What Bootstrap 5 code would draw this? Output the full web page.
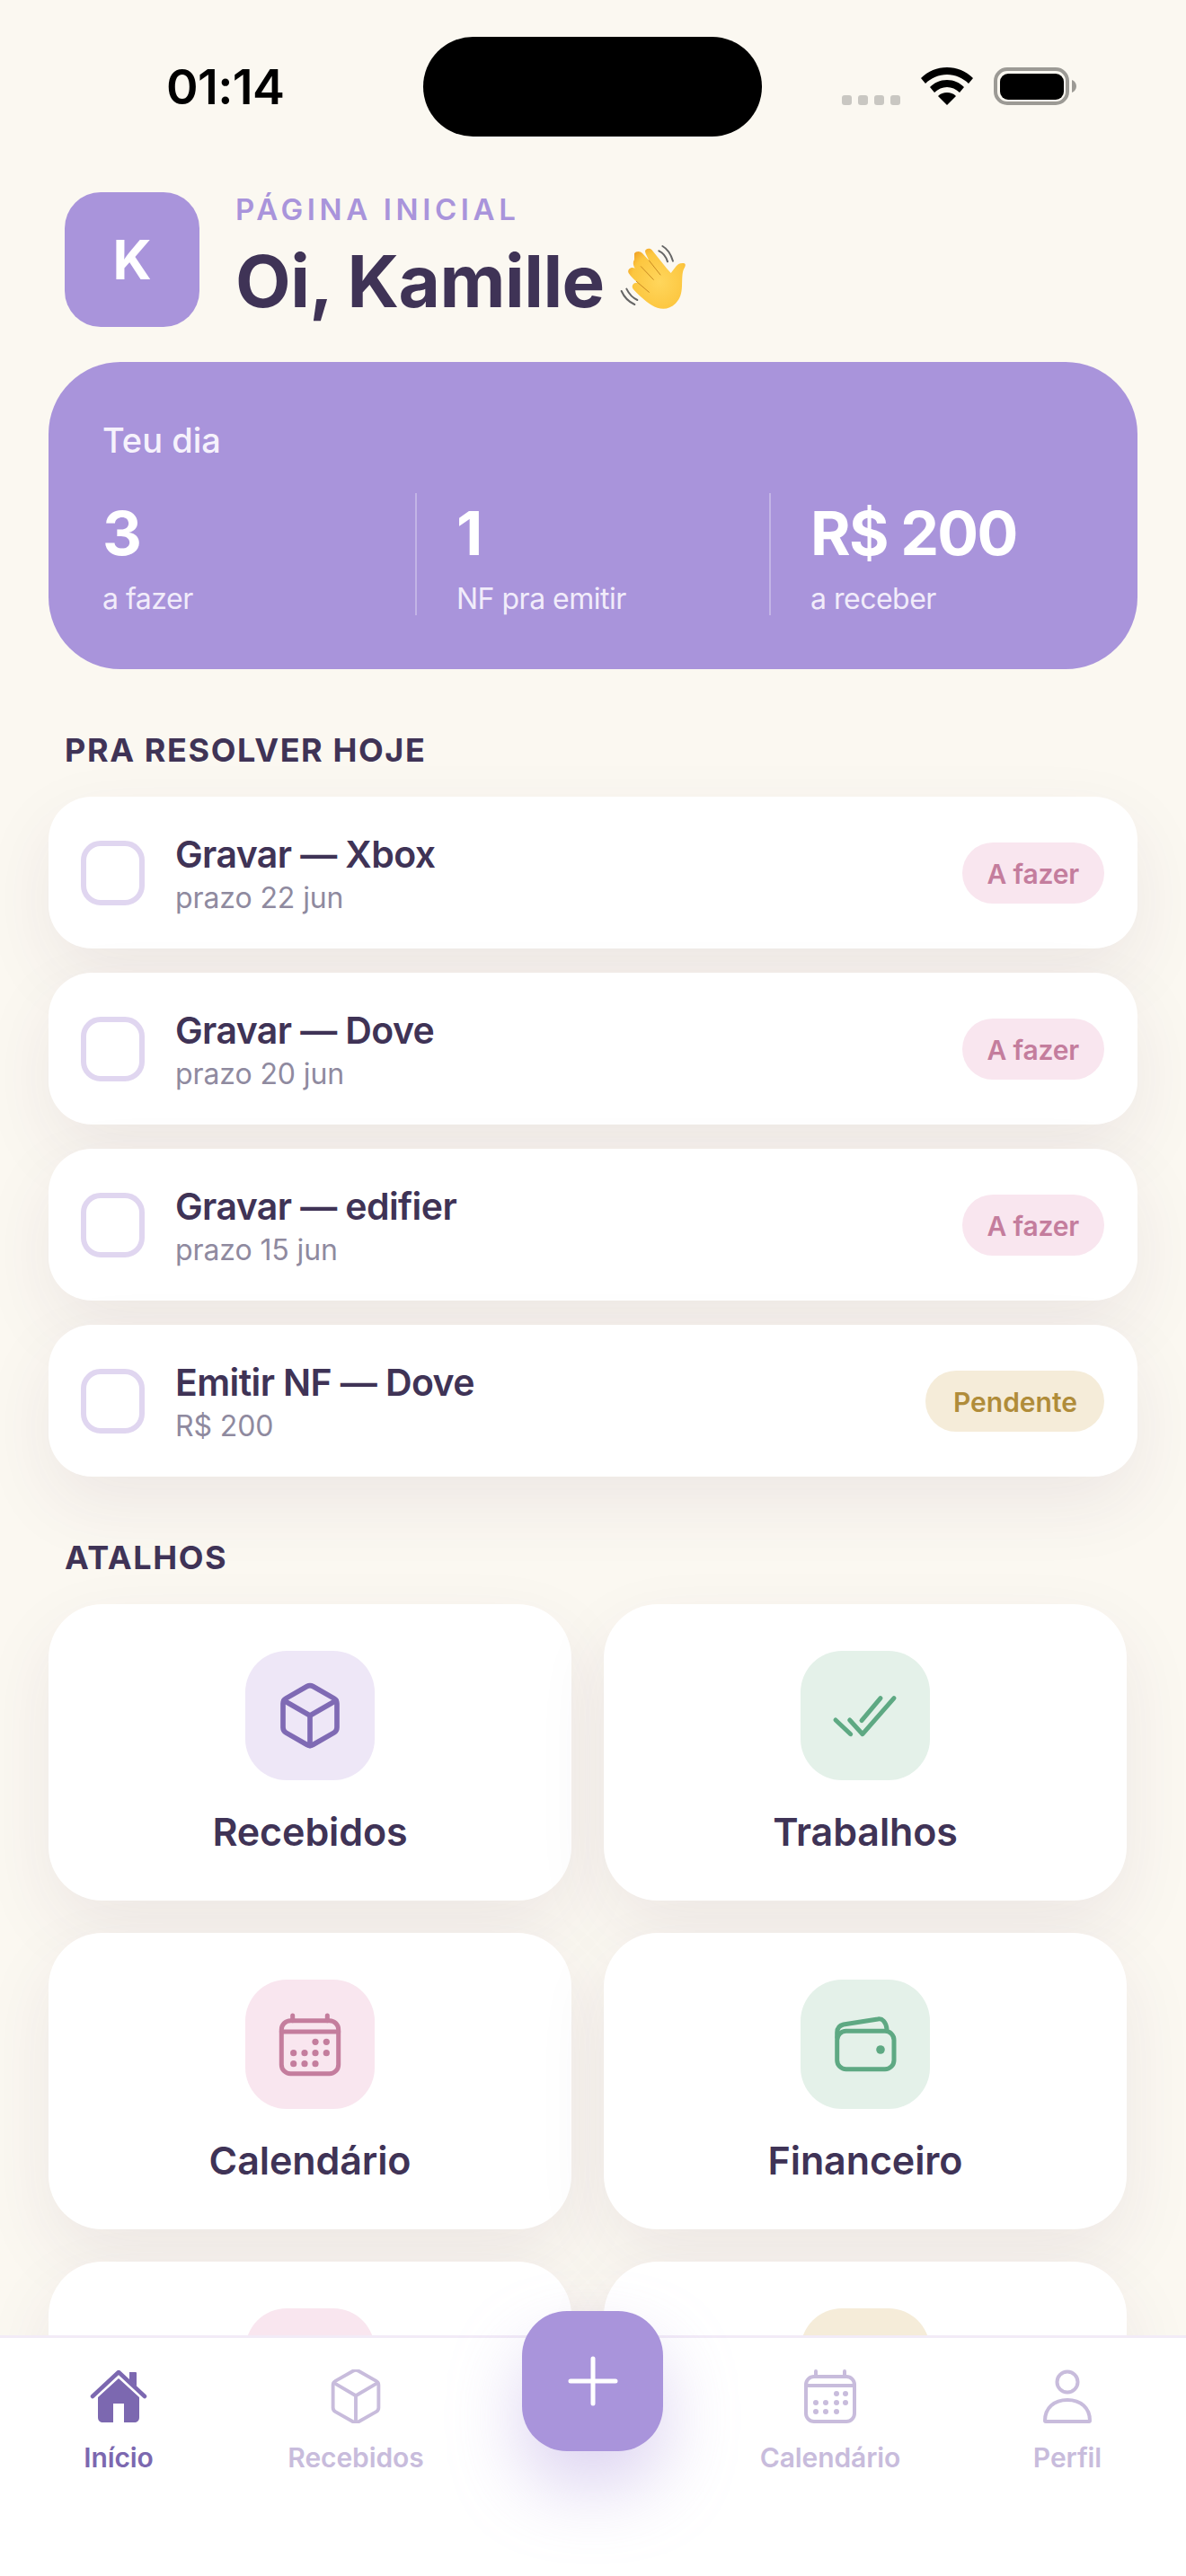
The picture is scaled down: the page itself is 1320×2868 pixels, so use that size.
<!DOCTYPE html>
<html lang="pt-BR">
<head>
    <meta charset="UTF-8">
    <meta name="viewport" content="width=device-width, initial-scale=1.0">
    <title>Página inicial</title>
    <link href="https://cdn.jsdelivr.net/npm/bootstrap@5.3.0/dist/css/bootstrap.min.css" rel="stylesheet">
    <style>
        body {
            font-family: Inter, "Liberation Sans", sans-serif;
            background-color: #fbf8f1;
            color: #3f3356;
            width: 1320px;
            height: 2868px;
            overflow: hidden;
        }
        .app-shell { height: 2868px; }
        .status-bar { padding-top: 41px; height: 173px; }
        .status-time { width: 471px; height: 111px; padding-left: 185px; font-size: 54px; font-weight: 600; color: #000; letter-spacing: -.6px; }
        .status-island { width: 377px; height: 111px; background: #000; border-radius: 56px; }
        .status-right { padding-left: 89px; height: 42px; margin-top: 34px; }
        .signal-dots { gap: 7px; width: 65px; margin-right: 23px; }
        .signal-dots span { width: 11px; height: 11px; background: #c9c7c2; border-radius: 3px; }
        .batt-wrap { margin-left: 23px; }
        .page-scroll { min-height: 0; padding: 41px 54px 0; }
        .hello-row { padding-left: 18px; gap: 40px; height: 150px; }
        .avatar-box { width: 150px; height: 150px; background: #a994db; color: #fff; border-radius: 40px; font-size: 60px; font-weight: 700; }
        .eyebrow { font-size: 33px; line-height: 40px; font-weight: 600; color: #a994db; letter-spacing: 4.6px; margin-top: -2px; margin-bottom: 10px; }
        .hello-title { font-size: 80px; line-height: 100px; font-weight: 700; margin: 0; letter-spacing: -.5px; }
        .wave-emoji { width: 80px; height: 80px; margin-left: 16px; margin-top: -6px; }
        .day-card { background: #a994db; color: #fff; border-radius: 80px; height: 342px; margin-top: 39px; padding: 65px 60px 0; }
        .day-title { font-size: 38px; line-height: 44px; font-weight: 500; color: #f6f2fc; }
        .day-stats { margin-top: 37px; height: 136px; }
        .day-stat { flex: 1 1 0; padding: 0 44px; border-left: 2px solid rgba(255,255,255,.3); }
        .day-stat:first-child { padding-left: 0; border-left: 0; }
        .day-stat:last-child { padding-right: 0; }
        .stat-num { font-size: 68px; line-height: 88px; font-weight: 700; letter-spacing: -1.7px; }
        .stat-label { font-size: 32px; line-height: 39px; margin-top: 10px; color: #f1ecfa; letter-spacing: -.5px; }
        .block-label { font-size: 36px; line-height: 44px; font-weight: 700; letter-spacing: 1.6px; padding-left: 18px; }
        .label-today { margin-top: 68px; margin-bottom: 30px; }
        .label-short { margin-top: 68px; margin-bottom: 30px; }
        .task-list { gap: 27px; }
        .task-row { height: 169px; background: #fff; border-radius: 48px; padding: 0 37px 0 36px; box-shadow: 0 30px 80px rgba(80,40,90,.08); }
        .task-check { width: 71px; height: 72px; border: 6px solid #e0d6f0; border-radius: 22px; flex: none; margin-right: 34px; }
        .task-name { font-size: 41px; line-height: 50px; font-weight: 600; letter-spacing: -.6px; padding-top: 2px; }
        .task-sub { font-size: 32px; line-height: 42px; color: #8f8a9f; letter-spacing: -.1px; margin-top: 3px; margin-bottom: -2px; }
        .task-tag { height: 68px; line-height: 70px; padding: 0 28px; font-size: 30px; font-weight: 600; border-radius: 34px; letter-spacing: -.2px; }
        .tag-todo { background: #f9e6ef; color: #c47d9d; }
        .tag-pending { background: #f5ecd9; color: #b08c3a; padding: 0 30px 0 31px; letter-spacing: 0; }
        .shortcut-grid { width: 1200px; grid-template-columns: 1fr 1fr; grid-auto-rows: 330px; gap: 36px; }
        .shortcut-card { background: #fff; border-radius: 60px; padding-top: 52px; box-shadow: 0 30px 80px rgba(80,40,90,.08); }
        .shortcut-icon { width: 144px; height: 144px; border-radius: 46px; }
        .shortcut-name { font-size: 43px; line-height: 52px; font-weight: 600; margin-top: 31px; letter-spacing: -.1px; }
        .tone-purple { background: #eee7f7; color: #7f6ab4; }
        .tone-green { background: #e4f1e9; color: #5ea983; }
        .tone-pink { background: #f9e6ef; color: #c47d9d; }
        .tone-yellow { background: #f5ecd9; color: #b08c3a; }
        .tab-bar { height: 268px; background: #fff; border-top: 3px solid #f2ebf7; padding-top: 35px; z-index: 2; }
        .tab-item { flex: 1 1 0; color: #c8bcdc; }
        .tab-item.is-active { color: #7c68b0; }
        .tab-icon { width: 64px; height: 60px; }
        .tab-label { font-size: 30px; line-height: 40px; font-weight: 600; margin-top: 18px; letter-spacing: -.1px; }
        .fab-add { left: 581px; top: -30px; width: 157px; height: 156px; background: #a994db; border-radius: 50px; box-shadow: 0 40px 80px rgba(169,148,219,.4); }
    </style>
</head>
<body>
    <div class="app-shell d-flex flex-column">
        <div class="status-bar d-flex align-items-start flex-shrink-0">
            <div class="status-time d-flex align-items-center">01:14</div>
            <div class="status-island"></div>
            <div class="status-right d-flex align-items-end">
                <div class="signal-dots d-flex"><span></span><span></span><span></span><span></span></div>
                <svg width="58" height="42" viewBox="0 0 58 42"><path d="M29 0C18 0 8 4 0 12l5 6c6-6 15-10 24-10s18 4 24 10l5-6C50 4 40 0 29 0z" fill="#000"/><path d="M29 14c-8 0-14 3-19 8l5 6c4-4 9-6 14-6s10 2 14 6l5-6c-5-5-11-8-19-8z" fill="#000"/><path d="M29 28c-4 0-7 1-10 4l10 10 10-10c-3-3-6-4-10-4z" fill="#000"/></svg>
                <svg class="batt-wrap" width="92" height="42" viewBox="0 0 92 42"><rect x="2" y="2" width="80" height="38" rx="13" fill="none" stroke="#9c9a95" stroke-width="4"/><rect x="7" y="7" width="71" height="29" rx="9" fill="#000"/><path d="M87 14c3 1 5 4 5 7s-2 6-5 7z" fill="#9c9a95"/></svg>
            </div>
        </div>

        <main class="page-scroll flex-grow-1 overflow-hidden">
            <div class="hello-row d-flex align-items-center">
                <div class="avatar-box d-flex align-items-center justify-content-center flex-shrink-0">K</div>
                <div>
                    <div class="eyebrow">PÁGINA INICIAL</div>
                    <div class="d-flex align-items-center">
                        <h1 class="hello-title">Oi, Kamille</h1>
                        <svg class="wave-emoji" viewBox="80 460 240 240">
                            <defs><radialGradient id="handFill" cx="55%" cy="55%" r="65%"><stop offset="0" stop-color="#ffd65c"/><stop offset=".75" stop-color="#fcc63f"/><stop offset="1" stop-color="#f0a226"/></radialGradient></defs>
                            <g fill="none" stroke="#666" stroke-width="6" stroke-linecap="round">
                                <path d="M213 488c14 6 24 20 29 36"/><path d="M225 472c16 9 29 30 35 50"/>
                                <path d="M88 622c8 18 24 36 44 45"/><path d="M105 615c7 14 20 30 36 37"/>
                            </g>
                            <path d="M131 497c6-10 20-9 27-1l22 24c-4-10-12-22-13-30-1-9 14-14 22-6l50 62 14 16c5-5 12-16 18-23 4-5 10-11 24-10 10 1 6 12 2 18-7 12-6 36-7 58-1 24-5 42-21 58-24 24-54 22-80 6-20-12-50-40-62-54-8-9 2-26 18-19-18-14-32-30-34-36-3-12 10-20 22-14-6-10-8-20-2-29z" fill="url(#handFill)"/>
                            <g fill="none" stroke="#c98a22" stroke-width="3" stroke-linecap="round"><path d="M180 520l38 48"/><path d="M153 540l42 44"/><path d="M138 590l42 36"/></g>
                        </svg>
                    </div>
                </div>
            </div>

            <section class="day-card">
                <div class="day-title">Teu dia</div>
                <div class="day-stats d-flex">
                    <div class="day-stat"><div class="stat-num">3</div><div class="stat-label">a fazer</div></div>
                    <div class="day-stat"><div class="stat-num">1</div><div class="stat-label">NF pra emitir</div></div>
                    <div class="day-stat"><div class="stat-num">R$ 200</div><div class="stat-label">a receber</div></div>
                </div>
            </section>

            <div class="block-label label-today">PRA RESOLVER HOJE</div>
            <div class="task-list d-flex flex-column">
                <div class="task-row d-flex align-items-center">
                    <div class="task-check"></div>
                    <div class="flex-grow-1"><div class="task-name">Gravar — Xbox</div><div class="task-sub">prazo 22 jun</div></div>
                    <span class="task-tag tag-todo">A fazer</span>
                </div>
                <div class="task-row d-flex align-items-center">
                    <div class="task-check"></div>
                    <div class="flex-grow-1"><div class="task-name">Gravar — Dove</div><div class="task-sub">prazo 20 jun</div></div>
                    <span class="task-tag tag-todo">A fazer</span>
                </div>
                <div class="task-row d-flex align-items-center">
                    <div class="task-check"></div>
                    <div class="flex-grow-1"><div class="task-name">Gravar — edifier</div><div class="task-sub">prazo 15 jun</div></div>
                    <span class="task-tag tag-todo">A fazer</span>
                </div>
                <div class="task-row d-flex align-items-center">
                    <div class="task-check"></div>
                    <div class="flex-grow-1"><div class="task-name">Emitir NF — Dove</div><div class="task-sub">R$ 200</div></div>
                    <span class="task-tag tag-pending">Pendente</span>
                </div>
            </div>

            <div class="block-label label-short">ATALHOS</div>
            <div class="shortcut-grid d-grid">
                <div class="shortcut-card d-flex flex-column align-items-center">
                    <div class="shortcut-icon tone-purple d-flex align-items-center justify-content-center">
                        <svg width="80" height="80" viewBox="0 0 24 24" fill="none" stroke="currentColor" stroke-width="1.7" stroke-linecap="round" stroke-linejoin="round"><path d="M21 16V8a2 2 0 0 0-1-1.73l-7-4a2 2 0 0 0-2 0l-7 4A2 2 0 0 0 3 8v8a2 2 0 0 0 1 1.73l7 4a2 2 0 0 0 2 0l7-4A2 2 0 0 0 21 16z"/><path d="M3.27 6.96 12 12.01l8.73-5.05"/><path d="M12 22.08V12"/></svg>
                    </div>
                    <div class="shortcut-name">Recebidos</div>
                </div>
                <div class="shortcut-card d-flex flex-column align-items-center">
                    <div class="shortcut-icon tone-green d-flex align-items-center justify-content-center">
                        <svg width="80" height="80" viewBox="0 0 80 80" fill="none" stroke="currentColor" stroke-width="5" stroke-linecap="round" stroke-linejoin="round"><path d="M7 45l16.7 15.7"/><path d="M22.7 45 37 60.7 72 20.7"/><path d="M36 45.7 57 20.7"/></svg>
                    </div>
                    <div class="shortcut-name">Trabalhos</div>
                </div>
                <div class="shortcut-card d-flex flex-column align-items-center">
                    <div class="shortcut-icon tone-pink d-flex align-items-center justify-content-center">
                        <svg width="80" height="80" viewBox="0 0 80 80" fill="none" stroke="currentColor" stroke-width="5" stroke-linecap="round"><rect x="8.3" y="13.7" width="63.4" height="59" rx="10"/><path d="M8.3 26h63.4"/><path d="M20.7 8v5.7M59.3 8v5.7"/><g fill="currentColor" stroke="none"><circle cx="46" cy="37.3" r="3.6"/><circle cx="58.3" cy="37.3" r="3.6"/><circle cx="21.7" cy="49.7" r="3.6"/><circle cx="34" cy="49.7" r="3.6"/><circle cx="46" cy="49.7" r="3.6"/><circle cx="58.3" cy="49.7" r="3.6"/><circle cx="21.7" cy="61.7" r="3.6"/><circle cx="34" cy="61.7" r="3.6"/><circle cx="46" cy="61.7" r="3.6"/></g></svg>
                    </div>
                    <div class="shortcut-name">Calendário</div>
                </div>
                <div class="shortcut-card d-flex flex-column align-items-center">
                    <div class="shortcut-icon tone-green d-flex align-items-center justify-content-center">
                        <svg width="80" height="80" viewBox="0 0 80 80" fill="none" stroke="currentColor" stroke-width="5" stroke-linecap="round"><rect x="8.7" y="25.3" width="63.3" height="42.4" rx="10"/><path d="M8.7 32v-5c0-5 3-8 7-9L54 12c5-1 9 3 10 11"/><circle cx="57" cy="46" r="4.8" fill="currentColor" stroke="none"/></svg>
                    </div>
                    <div class="shortcut-name">Financeiro</div>
                </div>
                <div class="shortcut-card d-flex flex-column align-items-center">
                    <div class="shortcut-icon tone-pink"></div>
                </div>
                <div class="shortcut-card d-flex flex-column align-items-center">
                    <div class="shortcut-icon tone-yellow"></div>
                </div>
            </div>
        </main>

        <nav class="tab-bar d-flex position-relative flex-shrink-0">
            <div class="tab-item is-active d-flex flex-column align-items-center">
                <svg class="tab-icon" viewBox="0 0 64 60" fill="currentColor"><path d="M32 10 9 31v22c0 4 2 6 6 6h11V38h12v21h11c4 0 6-2 6-6V31z"/><path d="M3 30 32 3l29 27" fill="none" stroke="currentColor" stroke-width="4.5" stroke-linecap="round" stroke-linejoin="round"/><path d="M44 3h7c1 0 1 1 1 1v15l-8-7z"/></svg>
                <div class="tab-label">Início</div>
            </div>
            <div class="tab-item d-flex flex-column align-items-center">
                <svg class="tab-icon" viewBox="1.3 1.2 21.4 20.1" fill="none" stroke="currentColor" stroke-width="1.3" stroke-linecap="round" stroke-linejoin="round"><path d="M20.5 15.5v-8.5a1.8 1.8 0 0 0-.9-1.5l-6.7-3.8a1.8 1.8 0 0 0-1.8 0L4.4 5.5a1.8 1.8 0 0 0-.9 1.5v8.5a1.8 1.8 0 0 0 .9 1.5l6.7 3.8a1.8 1.8 0 0 0 1.8 0l6.7-3.8a1.8 1.8 0 0 0 .9-1.5z"/><path d="M3.8 6.2 12 11l8.2-4.8"/><path d="M12 21.2V11"/></svg>
                <div class="tab-label">Recebidos</div>
            </div>
            <div class="tab-item"></div>
            <div class="tab-item d-flex flex-column align-items-center">
                <svg class="tab-icon" viewBox="0 0 64 60" fill="none" stroke="currentColor" stroke-width="4" stroke-linecap="round"><rect x="5" y="8" width="54" height="50" rx="9"/><path d="M5 18h54"/><path d="M16 2v6M48 2v6"/><g fill="currentColor" stroke="none"><circle cx="39" cy="27" r="3"/><circle cx="49" cy="27" r="3"/><circle cx="16" cy="37" r="3"/><circle cx="27" cy="37" r="3"/><circle cx="39" cy="37" r="3"/><circle cx="49" cy="37" r="3"/><circle cx="16" cy="47" r="3"/><circle cx="27" cy="47" r="3"/><circle cx="39" cy="47" r="3"/></g></svg>
                <div class="tab-label">Calendário</div>
            </div>
            <div class="tab-item d-flex flex-column align-items-center">
                <svg class="tab-icon" viewBox="0 0 64 60" fill="none" stroke="currentColor" stroke-width="4" stroke-linejoin="round"><circle cx="32" cy="14" r="11.5"/><path d="M7 57c0-14 10-23 25-23s25 9 25 23c0 1-1 1-1 1H8s-1 0-1-1z"/></svg>
                <div class="tab-label">Perfil</div>
            </div>
            <div class="fab-add position-absolute d-flex align-items-center justify-content-center">
                <svg width="56" height="56" viewBox="0 0 56 56" stroke="#fff" stroke-width="5" stroke-linecap="round"><path d="M28 3v50M3 28h50"/></svg>
            </div>
        </nav>
    </div>
    <script src="https://cdn.jsdelivr.net/npm/bootstrap@5.3.0/dist/js/bootstrap.bundle.min.js"></script>
</body>
</html>
